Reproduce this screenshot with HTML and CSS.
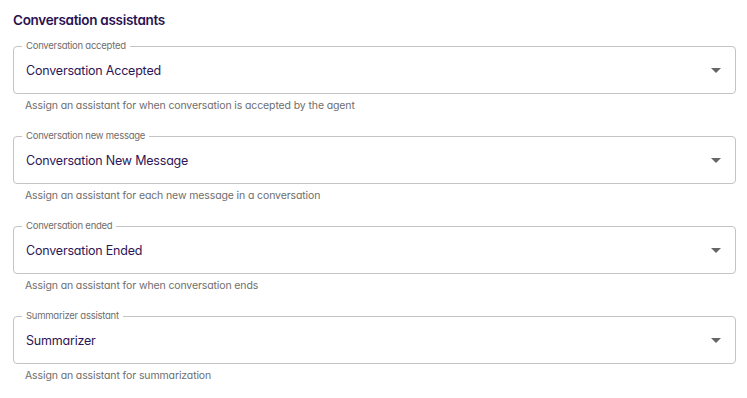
FILE: index.html
```html
<!DOCTYPE html>
<html lang="en">
<head>
    <meta charset="UTF-8">
    <meta name="viewport" content="width=device-width, initial-scale=1.0">
    <title>Conversation assistants</title>
    <link rel="stylesheet" href="styles.css">
</head>
<body>
    <main class="panel">
        <h2>Conversation assistants</h2>

        <div class="field">
            <div class="select">
                <span class="label">Conversation accepted</span>
                <span class="value">Conversation Accepted</span>
                <span class="arrow"></span>
            </div>
            <p class="helper">Assign an assistant for when conversation is accepted by the agent</p>
        </div>

        <div class="field">
            <div class="select">
                <span class="label">Conversation new message</span>
                <span class="value">Conversation New Message</span>
                <span class="arrow"></span>
            </div>
            <p class="helper">Assign an assistant for each new message in a conversation</p>
        </div>

        <div class="field">
            <div class="select">
                <span class="label">Conversation ended</span>
                <span class="value">Conversation Ended</span>
                <span class="arrow"></span>
            </div>
            <p class="helper">Assign an assistant for when conversation ends</p>
        </div>

        <div class="field">
            <div class="select">
                <span class="label">Summarizer assistant</span>
                <span class="value">Summarizer</span>
                <span class="arrow"></span>
            </div>
            <p class="helper">Assign an assistant for summarization</p>
        </div>
    </main>
</body>
</html>
```

FILE: styles.css
```css
body {
    margin: 0;
    background-color: #ffffff;
    font-family: Inter, "Noto Sans", sans-serif;
    font-feature-settings: "cv11";
}
.panel {
    padding: 10px 11px 0 13px;
    display: flex;
    flex-direction: column;
}
h2 {
    margin: 0 0 16px 0;
    font-size: 13.5px;
    line-height: 20px;
    font-weight: 600;
    letter-spacing: -0.3px;
    color: #2a1252;
}
.field {
    display: flex;
    flex-direction: column;
    margin-bottom: 22px;
}
.select {
    position: relative;
    height: 46px;
    border: 1px solid #c4c4c4;
    border-radius: 4px;
    display: flex;
    align-items: center;
    padding: 0 14px 0 12px;
}
.label {
    position: absolute;
    top: -7px;
    left: 8px;
    padding: 0 4px;
    background-color: #ffffff;
    font-size: 9.5px;
    line-height: 12px;
    letter-spacing: -0.25px;
    color: #6e6e6e;
}
.value {
    flex: 1;
    font-size: 12.5px;
    font-weight: 400;
    letter-spacing: -0.2px;
    color: #2e1656;
}
.arrow {
    width: 0;
    height: 0;
    border-left: 5px solid transparent;
    border-right: 5px solid transparent;
    border-top: 5px solid #666666;
}
.helper {
    margin: 4px 0 0 12px;
    font-size: 10.5px;
    line-height: 16px;
    letter-spacing: -0.12px;
    color: #6e6e6e;
}
```
